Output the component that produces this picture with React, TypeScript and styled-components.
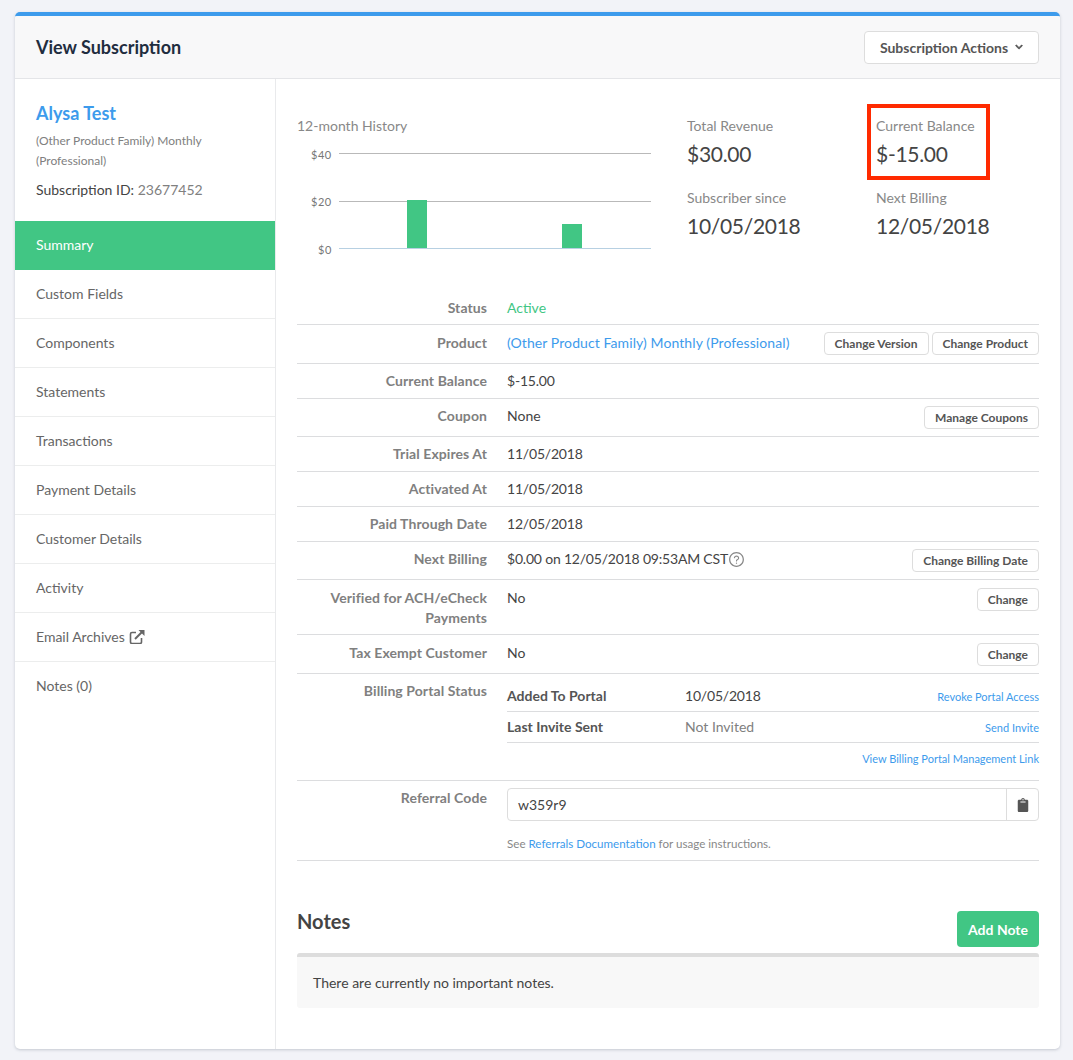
import React from 'react';
import styled, { createGlobalStyle } from 'styled-components';
import { FaChevronDown, FaClipboard } from 'react-icons/fa';
import { AiOutlineQuestionCircle } from 'react-icons/ai';

const GlobalStyle = createGlobalStyle`
  html, body {
    margin: 0;
    padding: 0;
    background: #f2f3f8;
    font-family: Lato, "Liberation Sans", sans-serif;
    font-size: 14px;
    color: #555;
  }
  * { box-sizing: border-box; }
`;

const Page = styled.div`
  padding: 12px 13px 11px 15px;
  height: 1060px;
`;
const Card = styled.div`
  height: 1037px;
  background: #fff;
  border-top: 4px solid #3d9bec;
  border-radius: 5px;
  box-shadow: 0 1px 3px rgba(60, 70, 90, 0.25);
  display: flex;
  flex-direction: column;
  overflow: hidden;
`;
const Header = styled.div`
  height: 63px;
  flex: none;
  display: flex;
  align-items: center;
  justify-content: space-between;
  padding: 0 21px;
  background: #f8f8f9;
  border-bottom: 1px solid #e4e5e8;
`;
const PageTitle = styled.h1`
  margin: 0;
  font-size: 18px;
  font-weight: 700;
  color: #1f2d3f;
`;
const ActionsButton = styled.button`
  width: 175px;
  height: 33px;
  display: flex;
  align-items: center;
  justify-content: center;
  gap: 7px;
  padding: 0;
  background: #fff;
  border: 1px solid #ddd;
  border-radius: 4px;
  font: 700 14px Lato, sans-serif;
  color: #555;
  svg {
    font-size: 8px;
    stroke: currentColor;
    stroke-width: 40;
  }
`;
const Body = styled.div`
  flex: 1;
  display: flex;
  min-height: 0;
`;
const Sidebar = styled.div`
  width: 261px;
  flex: none;
  border-right: 1px solid #e9eaec;
`;
const Profile = styled.div`
  padding: 22px 21px 21px;
`;
const CustomerName = styled.a`
  display: block;
  font-size: 18px;
  font-weight: 700;
  line-height: 24px;
  color: #3d9bec;
`;
const Plan = styled.div`
  margin-top: 6px;
  font-size: 12px;
  line-height: 20px;
  color: #808080;
`;
const SubscriptionId = styled.div`
  margin-top: 9px;
  line-height: 20px;
  color: #444;
  span { color: #808080; }
`;
const NavList = styled.div``;
const NavItem = styled.div<{ $active?: boolean }>`
  height: 49px;
  display: flex;
  align-items: center;
  gap: 4px;
  padding: 0 0 2px 21px;
  color: ${p => (p.$active ? '#fff' : '#666')};
  background: ${p => (p.$active ? '#41c684' : 'transparent')};
  border-bottom: ${p => (p.$active ? 'none' : '1px solid #eceded')};
  &:last-child { border-bottom: none; }
`;
const Main = styled.div`
  flex: 1;
  min-width: 0;
  padding: 0 21px;
`;
const Overview = styled.div`
  display: flex;
  height: 211px;
  padding-top: 38px;
`;
const ChartBlock = styled.div`
  width: 390px;
  flex: none;
`;
const MutedLabel = styled.div`
  font-size: 14px;
  line-height: 18px;
  color: #888;
`;
const ChartSvg = styled.svg`
  display: block;
  margin-top: 10px;
`;
const ChartText = styled.text`
  font-family: Lato, sans-serif;
  font-size: 11px;
  letter-spacing: 0.5px;
  fill: #777;
`;
const StatGrid = styled.div`
  display: grid;
  grid-template-columns: 189px 163px;
  grid-auto-rows: 72px;
`;
const Stat = styled.div`
  position: relative;
`;
const StatValue = styled.div`
  margin-top: 4px;
  font-size: 21px;
  letter-spacing: -0.3px;
  line-height: 30px;
  color: #444;
`;
const Highlight = styled.div`
  position: absolute;
  left: -9px;
  top: -13px;
  width: 123px;
  height: 76px;
  border: 4px solid #ff2a00;
`;
const Row = styled.div<{ $top?: number; $bottom?: number }>`
  display: flex;
  gap: 20px;
  padding: ${p => p.$top ?? 7}px 0 ${p => p.$bottom ?? 7}px;
  line-height: 20px;
  border-bottom: 1px solid #dcdddf;
`;
const RowLabel = styled.div`
  width: 190px;
  flex: none;
  text-align: right;
  font-weight: 700;
  letter-spacing: 0.08px;
  color: #808080;
`;
const RowValue = styled.div<{ $tone?: 'green' }>`
  flex: 1;
  min-width: 0;
  display: flex;
  align-items: flex-start;
  color: ${p => (p.$tone === 'green' ? '#41c684' : '#444')};
`;
const DateValue = styled(RowValue)`
  letter-spacing: -0.2px;
`;
const ValueText = styled.span`
  flex: 1;
  display: flex;
  align-items: center;
`;
const BillingText = styled(ValueText)`
  letter-spacing: -0.2px;
  svg { font-size: 17px; color: #888; }
`;
const LinkText = styled(ValueText)`
  letter-spacing: 0.09px;
  color: #3d9bec;
`;
const SmallButton = styled.button`
  height: 23px;
  padding: 0 10px;
  margin-left: 3px;
  background: #fff;
  border: 1px solid #ddd;
  border-radius: 4px;
  font: 700 12px Lato, sans-serif;
  color: #555;
`;
const ProductButton = styled(SmallButton)`
  margin-top: -1px;
`;
const PortalRows = styled.div`
  flex: 1;
  min-width: 0;
`;
const PortalRow = styled.div`
  display: flex;
  align-items: center;
  height: 31px;
  border-bottom: 1px solid #dcdddf;
`;
const PortalKey = styled.div`
  width: 178px;
  flex: none;
  font-weight: 700;
  color: #555;
`;
const PortalValue = styled.div<{ $muted?: boolean }>`
  flex: 1;
  letter-spacing: ${p => (p.$muted ? '0' : '-0.2px')};
  color: ${p => (p.$muted ? '#808080' : '#444')};
`;
const TinyLink = styled.a`
  padding-top: 1px;
  font-size: 11px;
  color: #3d9bec;
`;
const PortalFoot = styled.div`
  height: 31px;
  display: flex;
  align-items: center;
  justify-content: flex-end;
`;
const CodeGroup = styled.div`
  display: flex;
  height: 33px;
  border: 1px solid #ddd;
  border-radius: 4px;
`;
const CodeInput = styled.div`
  flex: 1;
  padding: 0 10px;
  line-height: 31px;
  color: #444;
`;
const CopyAddon = styled.div`
  width: 32px;
  display: flex;
  align-items: center;
  justify-content: center;
  border-left: 1px solid #ddd;
  color: #555;
`;
const HelpText = styled.div`
  margin-top: 14px;
  font-size: 11.6px;
  line-height: 18px;
  color: #888;
  a { color: #3d9bec; }
`;
const NotesHead = styled.div`
  display: flex;
  justify-content: space-between;
  align-items: flex-start;
  margin-top: 50px;
`;
const NotesTitle = styled.h2`
  margin: -1px 0 0;
  font-size: 20px;
  font-weight: 700;
  line-height: 22px;
  color: #444;
`;
const AddNote = styled.button`
  width: 82px;
  height: 36px;
  padding: 0;
  background: #41c684;
  border: none;
  border-radius: 4px;
  font: 700 14px Lato, sans-serif;
  color: #fff;
`;
const NotesPanel = styled.div`
  margin-top: 6px;
  height: 55px;
  padding: 0 16px;
  display: flex;
  align-items: center;
  background: #f8f8f8;
  border-top: 4px solid #ddd;
  border-radius: 3px;
  color: #444;
`;

const navItems = [
  'Summary',
  'Custom Fields',
  'Components',
  'Statements',
  'Transactions',
  'Payment Details',
  'Customer Details',
  'Activity',
  'Email Archives',
  'Notes (0)',
];

const ExternalIcon = () => (
  <svg width={16} height={15} viewBox="0 0 16 15">
    <path
      d="M7 3.5H3A1.5 1.5 0 0 0 1.5 5v8A1.5 1.5 0 0 0 3 14.5h8a1.5 1.5 0 0 0 1.5-1.5V9"
      fill="none"
      stroke="#666"
      strokeWidth={1.6}
    />
    <path d="M6 10L13 3" fill="none" stroke="#666" strokeWidth={2} />
    <path d="M9.5 1H15.5V7Z" fill="#666" />
  </svg>
);

const Chart = () => (
  <ChartSvg width={354} height={110} viewBox="0 0 354 110">
    <ChartText x={14} y={14}>$40</ChartText>
    <ChartText x={14} y={61}>$20</ChartText>
    <ChartText x={21} y={109}>$0</ChartText>
    <line x1={42} x2={354} y1={8.5} y2={8.5} stroke="#b9b9b9" />
    <line x1={42} x2={354} y1={56.5} y2={56.5} stroke="#b9b9b9" />
    <line x1={42} x2={354} y1={103.5} y2={103.5} stroke="#b7d0e2" />
    <rect x={110} y={55} width={20} height={48} fill="#41c684" />
    <rect x={265} y={79} width={20} height={24} fill="#41c684" />
  </ChartSvg>
);

export default function App() {
  return (
    <Page>
      <GlobalStyle />
      <Card>
        <Header>
          <PageTitle>View Subscription</PageTitle>
          <ActionsButton>
            Subscription Actions <FaChevronDown />
          </ActionsButton>
        </Header>
        <Body>
          <Sidebar>
            <Profile>
              <CustomerName>Alysa Test</CustomerName>
              <Plan>(Other Product Family) Monthly (Professional)</Plan>
              <SubscriptionId>
                Subscription ID: <span>23677452</span>
              </SubscriptionId>
            </Profile>
            <NavList>
              {navItems.map(item => (
                <NavItem key={item} $active={item === 'Summary'}>
                  {item}
                  {item === 'Email Archives' && <ExternalIcon />}
                </NavItem>
              ))}
            </NavList>
          </Sidebar>
          <Main>
            <Overview>
              <ChartBlock>
                <MutedLabel>12-month History</MutedLabel>
                <Chart />
              </ChartBlock>
              <StatGrid>
                <Stat>
                  <MutedLabel>Total Revenue</MutedLabel>
                  <StatValue>$30.00</StatValue>
                </Stat>
                <Stat>
                  <Highlight />
                  <MutedLabel>Current Balance</MutedLabel>
                  <StatValue>$-15.00</StatValue>
                </Stat>
                <Stat>
                  <MutedLabel>Subscriber since</MutedLabel>
                  <StatValue>10/05/2018</StatValue>
                </Stat>
                <Stat>
                  <MutedLabel>Next Billing</MutedLabel>
                  <StatValue>12/05/2018</StatValue>
                </Stat>
              </StatGrid>
            </Overview>
            <Row $top={8} $bottom={6}>
              <RowLabel>Status</RowLabel>
              <RowValue $tone="green">Active</RowValue>
            </Row>
            <Row $top={8} $bottom={8}>
              <RowLabel>Product</RowLabel>
              <RowValue>
                <LinkText>(Other Product Family) Monthly (Professional)</LinkText>
                <ProductButton>Change Version</ProductButton>
                <ProductButton>Change Product</ProductButton>
              </RowValue>
            </Row>
            <Row>
              <RowLabel>Current Balance</RowLabel>
              <DateValue>$-15.00</DateValue>
            </Row>
            <Row>
              <RowLabel>Coupon</RowLabel>
              <RowValue>
                <ValueText>None</ValueText>
                <SmallButton>Manage Coupons</SmallButton>
              </RowValue>
            </Row>
            <Row>
              <RowLabel>Trial Expires At</RowLabel>
              <DateValue>11/05/2018</DateValue>
            </Row>
            <Row>
              <RowLabel>Activated At</RowLabel>
              <DateValue>11/05/2018</DateValue>
            </Row>
            <Row>
              <RowLabel>Paid Through Date</RowLabel>
              <DateValue>12/05/2018</DateValue>
            </Row>
            <Row>
              <RowLabel>Next Billing</RowLabel>
              <RowValue>
                <BillingText>
                  $0.00 on 12/05/2018 09:53AM CST
                  <AiOutlineQuestionCircle />
                </BillingText>
                <SmallButton>Change Billing Date</SmallButton>
              </RowValue>
            </Row>
            <Row $top={8} $bottom={6}>
              <RowLabel>Verified for ACH/eCheck Payments</RowLabel>
              <RowValue>
                <ValueText>No</ValueText>
                <SmallButton>Change</SmallButton>
              </RowValue>
            </Row>
            <Row $top={8}>
              <RowLabel>Tax Exempt Customer</RowLabel>
              <RowValue>
                <ValueText>No</ValueText>
                <SmallButton>Change</SmallButton>
              </RowValue>
            </Row>
            <Row $bottom={6}>
              <RowLabel>Billing Portal Status</RowLabel>
              <PortalRows>
                <PortalRow>
                  <PortalKey>Added To Portal</PortalKey>
                  <PortalValue>10/05/2018</PortalValue>
                  <TinyLink>Revoke Portal Access</TinyLink>
                </PortalRow>
                <PortalRow>
                  <PortalKey>Last Invite Sent</PortalKey>
                  <PortalValue $muted>Not Invited</PortalValue>
                  <TinyLink>Send Invite</TinyLink>
                </PortalRow>
                <PortalFoot>
                  <TinyLink>View Billing Portal Management Link</TinyLink>
                </PortalFoot>
              </PortalRows>
            </Row>
            <Row>
              <RowLabel>Referral Code</RowLabel>
              <PortalRows>
                <CodeGroup>
                  <CodeInput>w359r9</CodeInput>
                  <CopyAddon>
                    <FaClipboard size={14} />
                  </CopyAddon>
                </CodeGroup>
                <HelpText>
                  See <a>Referrals Documentation</a> for usage instructions.
                </HelpText>
              </PortalRows>
            </Row>
            <NotesHead>
              <NotesTitle>Notes</NotesTitle>
              <AddNote>Add Note</AddNote>
            </NotesHead>
            <NotesPanel>There are currently no important notes.</NotesPanel>
          </Main>
        </Body>
      </Card>
    </Page>
  );
}
